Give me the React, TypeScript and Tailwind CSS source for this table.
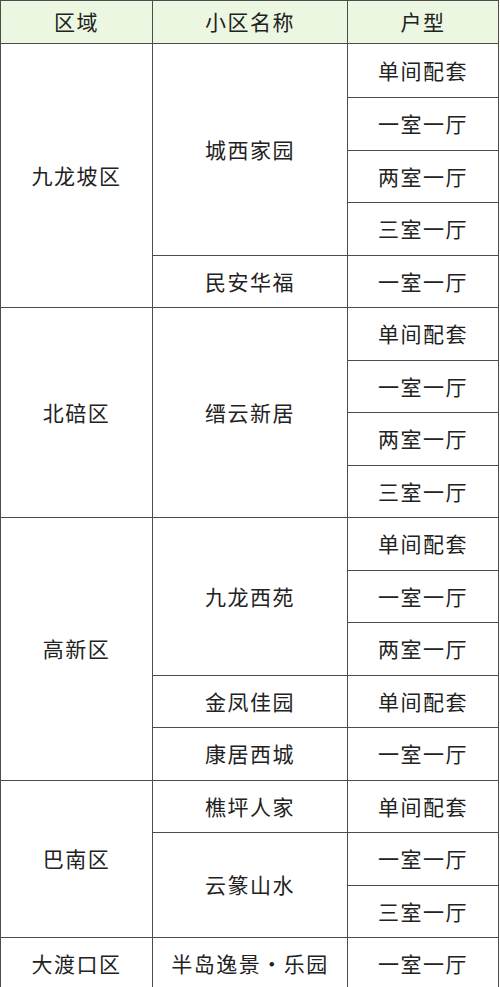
import React from "react";

type Cell = { text: string; cls: string };

const col1: Cell[] = [
  { text: "九龙坡区", cls: "row-start-2 row-span-5" },
  { text: "北碚区", cls: "row-start-7 row-span-4" },
  { text: "高新区", cls: "row-start-11 row-span-5" },
  { text: "巴南区", cls: "row-start-16 row-span-3" },
  { text: "大渡口区", cls: "row-start-19 row-span-1" },
];

const col2: Cell[] = [
  { text: "城西家园", cls: "row-start-2 row-span-4" },
  { text: "民安华福", cls: "row-start-6 row-span-1" },
  { text: "缙云新居", cls: "row-start-7 row-span-4" },
  { text: "九龙西苑", cls: "row-start-11 row-span-3" },
  { text: "金凤佳园", cls: "row-start-14 row-span-1" },
  { text: "康居西城", cls: "row-start-15 row-span-1" },
  { text: "樵坪人家", cls: "row-start-16 row-span-1" },
  { text: "云篆山水", cls: "row-start-17 row-span-2" },
  { text: "半岛逸景・乐园", cls: "row-start-19 row-span-1" },
];

const types = [
  "单间配套",
  "一室一厅",
  "两室一厅",
  "三室一厅",
  "一室一厅",
  "单间配套",
  "一室一厅",
  "两室一厅",
  "三室一厅",
  "单间配套",
  "一室一厅",
  "两室一厅",
  "单间配套",
  "一室一厅",
  "单间配套",
  "一室一厅",
  "三室一厅",
  "一室一厅",
];

const cellBase =
  "flex items-center justify-center border-r border-b border-[#4d4d4d]";

export default function App() {
  return (
    <div className="w-[500px] h-[987px] overflow-hidden bg-white">
      <div className="w-[499px] grid grid-cols-[152px_195px_151px] grid-rows-[43px_54px_repeat(17,52.5px)] border-l border-t border-[#4d4d4d] text-[21px] tracking-[1.5px] text-[#222] font-['Noto_Sans_CJK_SC','Noto_Sans',sans-serif]">
        <div className={`col-start-1 row-start-1 bg-[#ebf7e0] ${cellBase}`}>区域</div>
        <div className={`col-start-2 row-start-1 bg-[#ebf7e0] ${cellBase}`}>小区名称</div>
        <div className={`col-start-3 row-start-1 bg-[#ebf7e0] ${cellBase}`}>户型</div>
        {col1.map((c) => (
          <div key={c.text} className={`col-start-1 ${c.cls} ${cellBase}`}>
            {c.text}
          </div>
        ))}
        {col2.map((c) => (
          <div key={c.text} className={`col-start-2 ${c.cls} ${cellBase}`}>
            {c.text}
          </div>
        ))}
        {types.map((t, i) => (
          <div key={i} className={`col-start-3 ${cellBase}`}>
            {t}
          </div>
        ))}
      </div>
    </div>
  );
}
